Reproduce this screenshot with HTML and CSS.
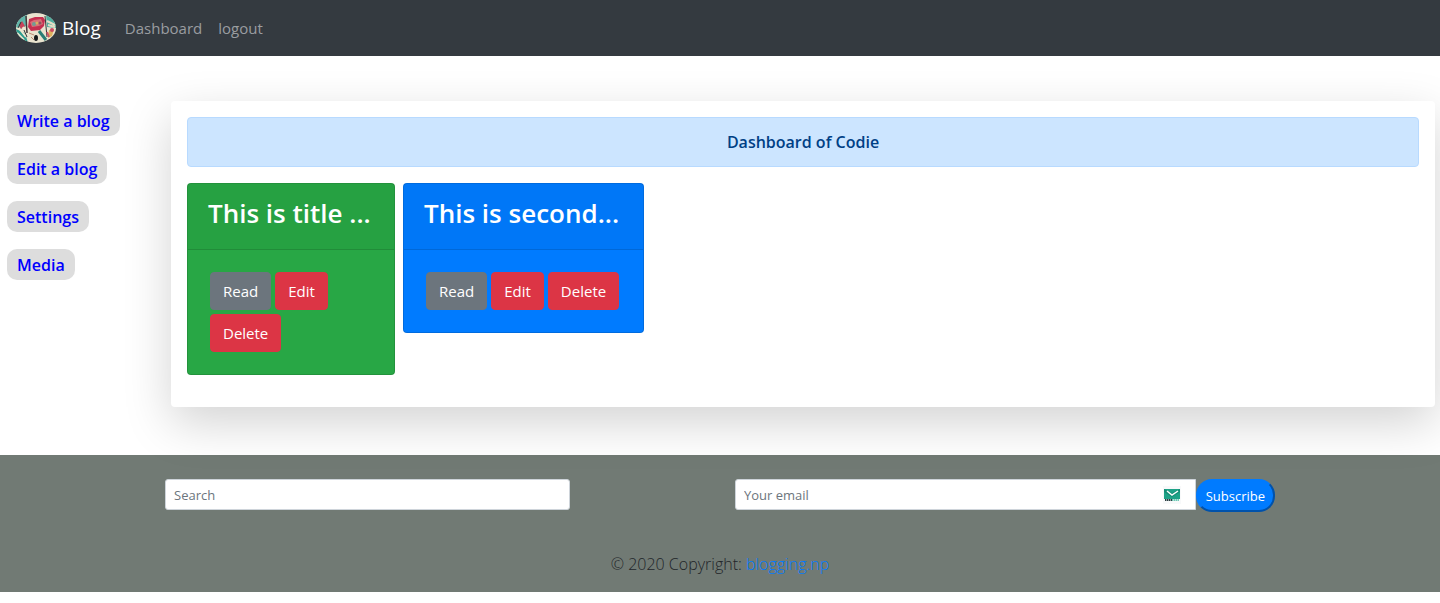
FILE: index.html
```html
<!DOCTYPE html>
<html lang="en">
<head>
<meta charset="utf-8">
<meta name="viewport" content="width=device-width, initial-scale=1">
<title>Blog</title>
<link rel="stylesheet" href="styles.css">
</head>
<body>
<nav class="navbar">
  <a class="brand" href="#">
    <svg class="logo" viewBox="0 0 40 30" aria-hidden="true">
      <defs><clipPath id="oval"><ellipse cx="20" cy="15" rx="20" ry="15"/></clipPath></defs>
      <g clip-path="url(#oval)">
        <rect width="40" height="30" fill="#e9e3cf"/>
        <path d="M0 0h11l-1 13-6 3-4-2z" fill="#5fb5a9"/>
        <path d="M3 12l3-4 3 5-4 3z" fill="#c8435a"/>
        <path d="M0 16l9 4 3 10H0z" fill="#2d9c8e"/>
        <path d="M2 14l8 10M1 20l7 7M7 14l4 9" stroke="#efe7d0" stroke-width="2"/>
        <path d="M5 9l-3 6M8 17l3 7" stroke="#2b3336"/>
        <path d="M10 3l1 17" stroke="#42393b" stroke-width="1.500"/>
        <path d="M13 6l6-2 8 0 2 3-1 6-4 4-9 1-3-4z" fill="#c52f50"/>
        <path d="M14 9l4-2 7-1 2 5-4 2-7 1z" fill="#d96f76"/>
        <circle cx="18" cy="11" r="2" fill="#719c95"/>
        <circle cx="21" cy="10" r="1.500" fill="#d7b25f"/>
        <circle cx="24" cy="10" r="1.500" fill="#8d535d"/>
        <path d="M13 20l5 2M15 24l3 3" stroke="#bd8c76"/>
        <ellipse cx="20" cy="25" rx="2" ry="3" fill="#15191c"/>
        <path d="M23 18l7 9" stroke="#287d75" stroke-width="3"/>
        <path d="M30 1l1 13 9 1V0z" fill="#4fae9f"/>
        <path d="M31 8l8 4M32 12l7 2" stroke="#e4ddc5" stroke-width="2"/>
        <path d="M29 3l2 21" stroke="#34383c"/>
        <path d="M33 17l5-1-2 7-4 2z" fill="#dfb25e"/>
        <circle cx="36" cy="17" r="2" fill="#ca4962"/>
        <path d="M31 19l2 5" stroke="#cc5364" stroke-width="2"/>
      </g>
    </svg>
    <span>Blog</span>
  </a>
  <a class="nav-link" href="#">Dashboard</a>
  <a class="nav-link" href="#">logout</a>
</nav>

<div class="layout">
  <aside class="sidebar">
    <a class="pill" href="#">Write a blog</a>
    <a class="pill" href="#">Edit a blog</a>
    <a class="pill" href="#">Settings</a>
    <a class="pill" href="#">Media</a>
  </aside>
  <main class="panel">
    <div class="alert">Dashboard of Codie</div>
    <div class="cards">
      <article class="card card-success">
        <h3 class="card-header">This is title ...</h3>
        <div class="card-body">
          <button class="btn btn-secondary" type="button">Read</button>
          <button class="btn btn-danger" type="button">Edit</button>
          <button class="btn btn-danger" type="button">Delete</button>
        </div>
      </article>
      <article class="card card-primary">
        <h3 class="card-header">This is second...</h3>
        <div class="card-body">
          <button class="btn btn-secondary" type="button">Read</button>
          <button class="btn btn-danger" type="button">Edit</button>
          <button class="btn btn-danger" type="button">Delete</button>
        </div>
      </article>
    </div>
  </main>
</div>

<footer class="footer">
  <div class="footer-forms">
    <form class="search-form">
      <input class="field" type="search" placeholder="Search" aria-label="Search">
    </form>
    <form class="subscribe-form">
      <div class="email-box">
        <input class="field field-email" type="email" placeholder="Your email" aria-label="Your email">
        <svg class="mail-icon" viewBox="0 0 18 18" aria-hidden="true">
          <rect width="18" height="18" fill="#f8f9fa"/>
          <path d="M1 3h16v10H1z" fill="#1fa287"/>
          <path d="M1 3l8 4 8-4v3L9 11 1 6z" fill="#158c74"/>
          <path d="M4 5l5 4 6-4" fill="none" stroke="#fff" stroke-width="1.500"/>
          <path d="M2 14h7" stroke="#2b3e42" stroke-width="2" stroke-dasharray="1.500 .5"/>
          <path d="M9 14h7" stroke="#6cc9b5" stroke-width="2" stroke-dasharray="1.500 .5"/>
        </svg>
      </div>
      <button class="subscribe" type="button">Subscribe</button>
    </form>
  </div>
  <p class="copyright">© 2020 Copyright: <a href="#">blogging.np</a></p>
</footer>
</body>
</html>
```

FILE: styles.css
```css
* {
  box-sizing: border-box;
}

body {
  margin: 0;
  background: #fff;
  color: #212529;
  font-family: "Segoe UI", "Open Sans", "Noto Sans", sans-serif;
  font-size: 15px;
  line-height: 24px;
}

a {
  text-decoration: none;
}

input,
button {
  font-family: inherit;
}

.navbar {
  display: flex;
  align-items: center;
  height: 56px;
  padding: 0 16px;
  background: #343a40;
}

.brand {
  display: flex;
  align-items: center;
  gap: 6px;
  margin-right: 16px;
  color: #fff;
  font-size: 19px;
}

.logo {
  width: 40px;
  height: 30px;
}

.nav-link {
  padding: 8px;
  color: #9a9da0;
}

.layout {
  display: flex;
  padding: 45px 5px 48px 7px;
}

.sidebar {
  display: flex;
  flex: 0 0 164px;
  flex-direction: column;
  align-items: flex-start;
  gap: 17px;
  padding-top: 4px;
}

.pill {
  padding: 4px 10px 3px;
  border-radius: 10px;
  background: #ddd;
  color: #00f;
  font-size: 16px;
  font-weight: 600;
}

.panel {
  flex: 1;
  min-width: 0;
  padding: 16px 16px 32px;
  border-radius: 4px;
  background: #fff;
  box-shadow: 0 16px 48px rgba(0, 0, 0, .175);
}

.alert {
  margin-bottom: 16px;
  padding: 12px 20px;
  border: 1px solid #b8daff;
  border-radius: 4px;
  background: #cce5ff;
  color: #004085;
  font-size: 16px;
  font-weight: 600;
  text-align: center;
}

.cards {
  display: flex;
  flex-wrap: wrap;
  align-items: flex-start;
  gap: 8px;
}

.card {
  border: 1px solid rgba(0, 0, 0, .125);
  border-radius: 4px;
  color: #fff;
}

.card-success {
  width: 208px;
  background: #28a745;
}

.card-primary {
  width: 241px;
  background: #007bff;
}

.card-header {
  margin: 0;
  padding: 12px 20px 19px;
  border-bottom: 1px solid rgba(0, 0, 0, .125);
  background: rgba(0, 0, 0, .03);
  font-size: 26px;
  font-weight: 600;
  line-height: 34px;
  white-space: nowrap;
}

.card-body {
  display: flex;
  flex-wrap: wrap;
  gap: 4px;
  padding: 22px;
}

.btn {
  padding: 6px 12px;
  border: 1px solid transparent;
  border-radius: 4px;
  color: #fff;
  font-size: 15px;
  line-height: 24px;
}

.btn-secondary {
  border-color: #6c757d;
  background: #6c757d;
}

.btn-danger {
  border-color: #dc3545;
  background: #dc3545;
}

.footer {
  padding: 24px 16px 16px;
  background: rgba(33, 47, 38, .64);
}

.footer-forms {
  display: grid;
  grid-template-columns: 1fr 1fr;
  gap: 30px;
  max-width: 1110px;
  margin: 0 auto 40px;
}

.search-form {
  width: 75%;
}

.subscribe-form {
  display: flex;
  align-items: flex-start;
}

.email-box {
  position: relative;
  flex: 1;
}

.field {
  display: block;
  width: 100%;
  height: 31px;
  padding: 4px 8px;
  border: 1px solid #ced4da;
  border-radius: 3px;
  background: #fff;
  color: #495057;
  font-size: 13px;
  appearance: none;
}

.field-email {
  border-radius: 3px 0 0 3px;
}

.field::placeholder {
  color: #6c757d;
  opacity: 1;
}

.mail-icon {
  position: absolute;
  top: 7px;
  right: 15px;
  width: 18px;
  height: 18px;
}

.subscribe {
  height: 33px;
  padding: 0 8px;
  border: 2px outset #007bff;
  border-top-color: #007bff;
  border-left-color: #007bff;
  border-radius: 16px;
  background: #007bff;
  color: #fff;
  font-size: 13px;
}

.copyright {
  margin: 0;
  font-size: 16px;
  font-weight: 300;
  text-align: center;
}

.copyright a {
  color: #007bff;
}
```
